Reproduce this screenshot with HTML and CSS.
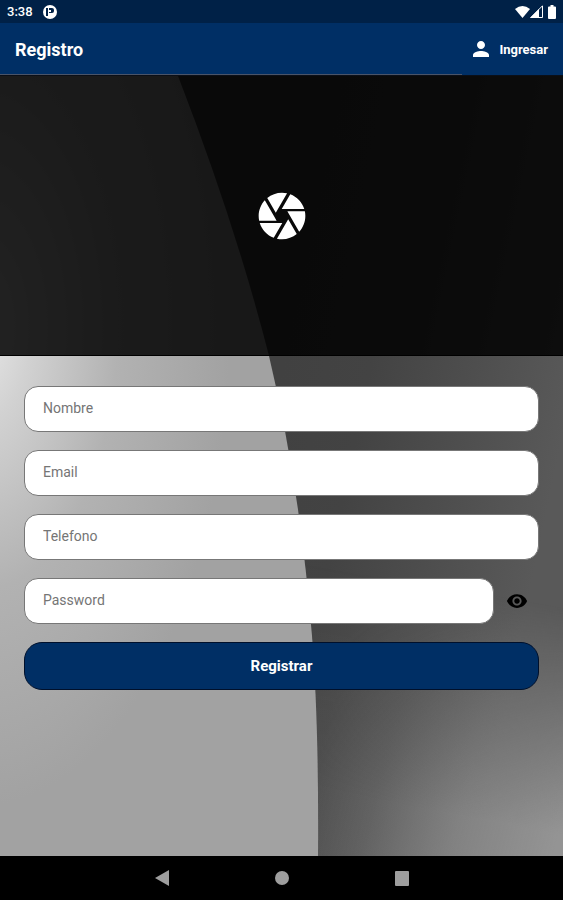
FILE: index.html
```html
<!DOCTYPE html>
<html lang="es">

<head>
  <meta charset="UTF-8" />
  <meta name="viewport" content="width=device-width, initial-scale=1.0" />
  <title>Registro</title>
  <link rel="stylesheet" href="styles.css">
</head>

<body>

  <!-- Barra de estado -->
  <div class="status-bar">
    <div class="status-left">
      <span>3:38</span>
      <svg width="14" height="14" viewBox="0 0 14 14" aria-hidden="true">
        <circle cx="7" cy="7" r="7" fill="#fff" />
        <path d="M3 3h2v8H3zM6 3h3a2 2 0 0 1 2 2v1a2 2 0 0 1-2 2H6V7h2V5H6z" fill="#002147" />
      </svg>
    </div>
    <div class="status-right">
      <svg width="15" height="12" viewBox="0 0 15 12" aria-hidden="true">
        <path d="M0 3Q7.500-3 15 3L7.500 12z" fill="#fff" />
      </svg>
      <svg class="signal" width="13" height="13" viewBox="0 0 13 13" aria-hidden="true">
        <path d="M12.500 .8V12.500H.8z" fill="none" stroke="#fff" />
        <path d="M0 13 9 4v9z" fill="#fff" />
      </svg>
      <svg width="8" height="14" viewBox="0 0 8 14" aria-hidden="true">
        <path d="M2.500 0h3v1.500H7a1 1 0 0 1 1 1V13a1 1 0 0 1-1 1H1a1 1 0 0 1-1-1V2.500a1 1 0 0 1 1-1h1.500z" fill="#fff" />
      </svg>
    </div>
  </div>

  <header class="header">
    <h1 class="header-title">Registro</h1>
    <a href="#" class="header-link">
      <svg width="24" height="24" viewBox="0 0 24 24" aria-hidden="true">
        <path d="M12 12c2.210 0 4-1.790 4-4s-1.790-4-4-4-4 1.790-4 4 1.790 4 4 4zm0 2c-2.670 0-8 1.340-8 4v2h16v-2c0-2.660-5.330-4-8-4z" fill="#fff" />
      </svg>
      <span>Ingresar</span>
    </a>
  </header>

  <main class="screen">

    <!-- Fondo -->
    <svg class="screen-bg" viewBox="0 0 563 780" preserveAspectRatio="none" aria-hidden="true">
      <defs>
        <linearGradient id="dark" x1="280" y1="300" x2="563" y2="360" gradientUnits="userSpaceOnUse">
          <stop offset="0" stop-color="#414141" />
          <stop offset=".3" stop-color="#434343" />
          <stop offset="1" stop-color="#595959" />
        </linearGradient>
        <linearGradient id="shine" x1="320" y1="680" x2="563" y2="740" gradientUnits="userSpaceOnUse">
          <stop offset="0" stop-color="#949494" stop-opacity=".12" />
          <stop offset=".25" stop-color="#949494" stop-opacity=".3" />
          <stop offset=".6" stop-color="#949494" stop-opacity=".7" />
          <stop offset="1" stop-color="#949494" />
        </linearGradient>
        <linearGradient id="fade" x1="280" y1="480" x2="240" y2="700" gradientUnits="userSpaceOnUse">
          <stop offset="0" stop-color="#000" />
          <stop offset="1" stop-color="#fff" />
        </linearGradient>
        <mask id="fadeMask" maskUnits="userSpaceOnUse" x="0" y="0" width="563" height="780">
          <rect width="563" height="780" fill="url(#fade)" />
        </mask>
        <radialGradient id="light" cx="0" cy="0" r="1" gradientUnits="userSpaceOnUse" gradientTransform="translate(-20 250) scale(250 480)">
          <stop offset="0" stop-color="#e8e8e8" />
          <stop offset=".2" stop-color="#d2d2d2" />
          <stop offset=".55" stop-color="#b2b2b2" />
          <stop offset="1" stop-color="#a2a2a2" />
        </radialGradient>
      </defs>
      <rect width="563" height="780" fill="url(#dark)" />
      <rect width="563" height="780" fill="url(#shine)" mask="url(#fadeMask)" />
      <path d="M0 0H178Q236 150 269 280Q300 410 312 560Q319 650 318 780H0z" fill="url(#light)" />
    </svg>

    <section class="hero">
      <svg width="56" height="56" viewBox="0 0 24 24" aria-hidden="true">
        <path d="M9.400 10.500l4.770-8.260C13.470 2.090 12.750 2 12 2c-2.400 0-4.600.85-6.320 2.250l3.660 6.350.06-.1zM21.540 9c-.92-2.920-3.150-5.260-6-6.340L11.880 9h9.660zm.26 1h-7.490l.29.5 4.760 8.250C21 16.970 22 14.610 22 12c0-.69-.07-1.350-.2-2zM8.540 12l-3.900-6.750C3.010 7.030 2 9.390 2 12c0 .69.07 1.350.2 2h7.490l-1.150-2zm-6.080 3c.92 2.920 3.150 5.260 6 6.340L12.120 15H2.460zm11.270 0l-3.900 6.760c.7.15 1.420.24 2.170.24 2.400 0 4.600-.85 6.320-2.250l-3.660-6.350-.93 1.600z" fill="#fff" />
      </svg>
    </section>

    <form class="form">
      <input type="text" class="field" placeholder="Nombre" aria-label="Nombre" />
      <input type="email" class="field" placeholder="Email" aria-label="Email" />
      <input type="tel" class="field" placeholder="Telefono" aria-label="Telefono" />
      <div class="password-row">
        <input type="password" class="field" placeholder="Password" aria-label="Password" />
        <button type="button" class="eye-btn" aria-label="Mostrar password">
          <svg width="22" height="22" viewBox="0 0 24 24" aria-hidden="true">
            <path d="M12 4.500C7 4.500 2.730 7.610 1 12c1.730 4.390 6 7.500 11 7.500s9.270-3.110 11-7.500c-1.730-4.390-6-7.500-11-7.500zM12 17c-2.760 0-5-2.240-5-5s2.240-5 5-5 5 2.240 5 5-2.240 5-5 5zm0-8c-1.660 0-3 1.340-3 3s1.340 3 3 3 3-1.340 3-3-1.340-3-3-3z" fill="#000" />
          </svg>
        </button>
      </div>
      <button type="submit" class="submit-btn">Registrar</button>
    </form>

  </main>

  <!-- Botones del sistema -->
  <nav class="nav-bar">
    <button type="button" class="nav-btn" aria-label="Atras">
      <svg width="16" height="16" viewBox="0 0 16 16"><path d="M15 0v16L1 8z" fill="#9e9e9e" /></svg>
    </button>
    <button type="button" class="nav-btn" aria-label="Inicio">
      <svg width="16" height="16" viewBox="0 0 16 16"><circle cx="8" cy="8" r="7" fill="#9e9e9e" /></svg>
    </button>
    <button type="button" class="nav-btn" aria-label="Recientes">
      <svg width="16" height="16" viewBox="0 0 16 16"><rect x="1" y="1" width="14" height="15" rx="1" fill="#9e9e9e" /></svg>
    </button>
  </nav>

</body>

</html>
```
FILE: styles.css
```css
* {
  box-sizing: border-box;
}

body {
  margin: 0;
  min-height: 100vh;
  display: flex;
  flex-direction: column;
  font-family: Roboto, "Liberation Sans", sans-serif;
  background: #000;
}

button,
input {
  font-family: inherit;
}

svg {
  display: block;
}

/* Barra de estado */
.status-bar {
  display: flex;
  justify-content: space-between;
  align-items: center;
  height: 23px;
  padding: 0 7px;
  background: #002147;
  color: #fff;
  font-size: 13px;
  font-weight: 500;
}

.status-left,
.status-right {
  display: flex;
  align-items: center;
}

.status-left {
  gap: 10px;
}

.signal {
  margin-right: 5px;
}

/* Encabezado */
.header {
  display: flex;
  justify-content: space-between;
  align-items: center;
  height: 53px;
  padding: 0 15px;
  background: linear-gradient(to right, #4a5468 82%, transparent 82%) left bottom / 100% 1px no-repeat #002f65;
  border-bottom: 1px solid #0a0f18;
}

.header-title {
  margin: 0;
  color: #fff;
  font-size: 18px;
  font-weight: 700;
}

.header-link {
  display: flex;
  align-items: center;
  gap: 6px;
  color: #fff;
  font-size: 13px;
  font-weight: 700;
  text-decoration: none;
}

/* Contenido */
.screen {
  position: relative;
  flex: 1;
}

.screen-bg {
  position: absolute;
  inset: 0;
  width: 100%;
  height: 100%;
}

.hero {
  position: relative;
  display: flex;
  justify-content: center;
  align-items: center;
  height: 280px;
  background: rgba(0, 0, 0, 0.85);
  border-bottom: 1px solid #000;
}

.form {
  position: relative;
  display: flex;
  flex-direction: column;
  gap: 18px;
  padding: 30px 24px;
}

.field {
  width: 100%;
  min-width: 0;
  height: 46px;
  padding: 0 18px 2px;
  border: 1px solid #777;
  border-radius: 14px;
  background: #fff;
  color: #222;
  font-size: 14px;
  outline: none;
}

.field::placeholder {
  color: #757575;
  opacity: 1;
}

.password-row {
  display: flex;
  align-items: center;
}

.eye-btn {
  display: flex;
  flex: 0 0 45px;
  justify-content: center;
  padding: 0;
  border: none;
  background: none;
  cursor: pointer;
}

.submit-btn {
  height: 48px;
  border: 1px solid #00102b;
  border-radius: 18px;
  background: #002f65;
  color: #fff;
  font-size: 15px;
  font-weight: 700;
  cursor: pointer;
}

/* Botones del sistema */
.nav-bar {
  display: flex;
  justify-content: center;
  align-items: center;
  gap: 80px;
  height: 44px;
  background: #000;
}

.nav-btn {
  display: flex;
  justify-content: center;
  width: 40px;
  padding: 0;
  border: none;
  background: none;
}
```
